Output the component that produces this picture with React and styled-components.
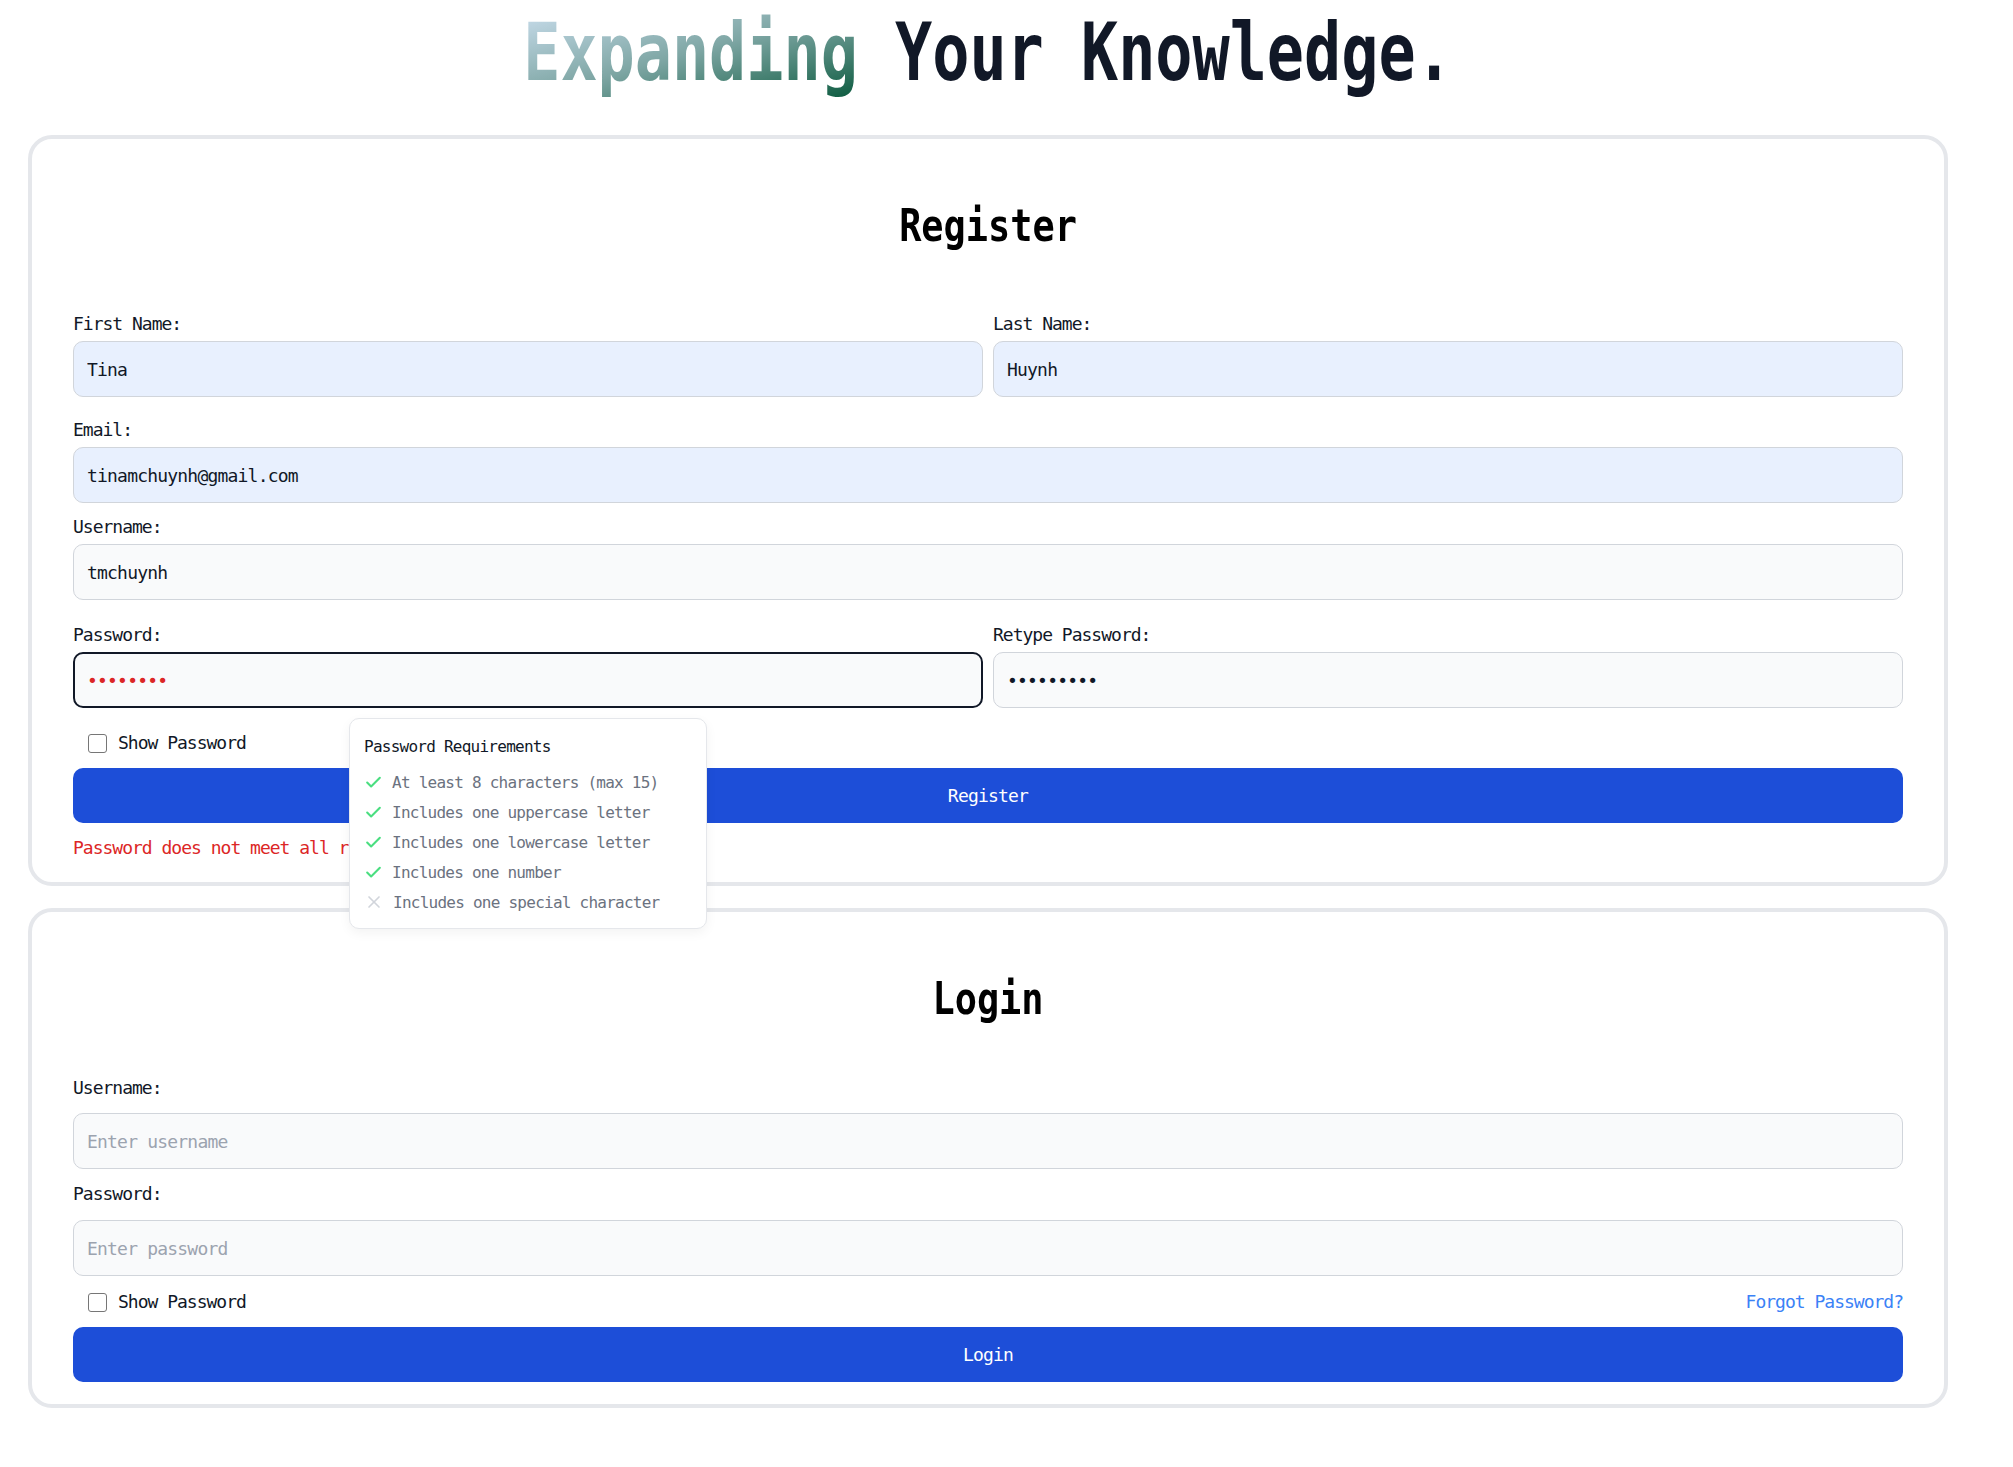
import React from "react";
import styled, { createGlobalStyle } from "styled-components";
import { Check, X } from "lucide-react";

const GlobalStyle = createGlobalStyle`
  * {
    box-sizing: border-box;
  }
  body {
    margin: 0;
    background: #ffffff;
    font-family: "DejaVu Sans Mono", monospace;
    color: #111827;
  }
`;

const Page = styled.div`
  width: 1920px;
  margin-left: 28px;
  padding-top: 13px;
`;

const Title = styled.h1`
  margin: 0 0 42px;
  font-size: 80px;
  line-height: 80px;
  font-weight: 700;
  text-align: center;
  white-space: nowrap;
  color: #111827;
  transform: scaleX(0.772);
`;

const Gradient = styled.span`
  background: linear-gradient(to bottom right, #cde0f0, #7ea6a4 50%, #0b5a3e);
  -webkit-background-clip: text;
  background-clip: text;
  color: transparent;
`;

const Card = styled.section`
  border: 4px solid #e5e7eb;
  border-radius: 24px;
  padding: 62px 41px 22px;
  margin-bottom: 22px;
  background: #ffffff;
`;

const Heading = styled.h2`
  margin: 0 0 ${(p) => p.$mb}px;
  font-size: 45px;
  line-height: 50px;
  font-weight: 700;
  text-align: center;
  color: #000000;
  transform: scaleX(0.82);
`;

const Row = styled.div`
  display: grid;
  grid-template-columns: 1fr 1fr;
  gap: 10px;
  margin-bottom: ${(p) => p.$mb || 0}px;
`;

const Field = styled.div`
  position: relative;
  margin-bottom: ${(p) => p.$mb || 0}px;
`;

const Label = styled.label`
  display: block;
  margin-bottom: ${(p) => p.$gap ?? 5}px;
  font-size: 18px;
  line-height: 24px;
  letter-spacing: -1px;
  color: #111827;
`;

const Input = styled.input`
  display: block;
  width: 100%;
  height: 56px;
  padding: 0 ${(p) => (p.$focused ? 12 : 13)}px;
  border: ${(p) => (p.$focused ? "2px solid #111827" : "1px solid #d1d5db")};
  border-radius: 10px;
  background: ${(p) => (p.$autofill ? "#e8f0fe" : "#f9fafb")};
  font-family: inherit;
  font-size: 18px;
  letter-spacing: -0.8px;
  color: ${(p) => (p.$invalid ? "#dc2626" : "#111827")};
  outline: none;

  &::placeholder {
    color: #9ca3af;
  }
`;

const CheckRow = styled.div`
  display: flex;
  align-items: center;
  justify-content: space-between;
  height: 24px;
  padding-left: 15px;
  margin-bottom: 13px;
`;

const CheckLabel = styled.label`
  display: flex;
  align-items: center;
  gap: 11px;
  font-size: 18px;
  line-height: 24px;
  letter-spacing: -1px;
  color: #111827;
`;

const Checkbox = styled.input`
  appearance: none;
  width: 19px;
  height: 19px;
  margin: 0;
  border: 1px solid #767676;
  border-radius: 3px;
  background: #ffffff;
`;

const ForgotLink = styled.a`
  font-size: 18px;
  line-height: 24px;
  letter-spacing: -1px;
  color: #3b82f6;
  text-decoration: none;
`;

const Button = styled.button`
  display: block;
  width: 100%;
  height: 55px;
  border: none;
  border-radius: 10px;
  background: #1d4ed8;
  color: #ffffff;
  font-family: inherit;
  font-size: 18px;
  letter-spacing: -0.8px;
`;

const ErrorText = styled.p`
  margin: 13px 0 0;
  font-size: 18px;
  line-height: 24px;
  letter-spacing: -1px;
  color: #dc2626;
`;

// popover sits over the form, as in the live page
const Tooltip = styled.div`
  position: absolute;
  z-index: 10;
  top: calc(100% + 10px);
  left: 276px;
  width: 358px;
  padding: 18px 14px 11px;
  border: 1px solid #e5e7eb;
  border-radius: 10px;
  background: #ffffff;
  box-shadow: 0 4px 12px rgba(0, 0, 0, 0.05);
`;

const TooltipTitle = styled.div`
  margin-bottom: 10px;
  font-size: 16px;
  line-height: 20px;
  letter-spacing: -0.75px;
  color: #111827;
`;

const Requirement = styled.div`
  display: flex;
  align-items: center;
  gap: 9px;
  height: 30px;
  font-size: 16px;
  letter-spacing: -0.75px;
  color: #6b7280;

  & > svg {
    flex-shrink: 0;
    color: ${(p) => (p.$met ? "#4ade80" : "#d1d5db")};
  }
`;

const requirements = [
  { text: "At least 8 characters (max 15)", met: true },
  { text: "Includes one uppercase letter", met: true },
  { text: "Includes one lowercase letter", met: true },
  { text: "Includes one number", met: true },
  { text: "Includes one special character", met: false },
];

function App() {
  return (
    <Page>
      <GlobalStyle />
      <Title>
        <Gradient>Expanding</Gradient> Your Knowledge.
      </Title>

      <Card>
        <Heading $mb={61}>Register</Heading>
        <Row $mb={21}>
          <Field>
            <Label>First Name:</Label>
            <Input $autofill defaultValue="Tina" />
          </Field>
          <Field>
            <Label>Last Name:</Label>
            <Input $autofill defaultValue="Huynh" />
          </Field>
        </Row>
        <Field $mb={12}>
          <Label>Email:</Label>
          <Input $autofill defaultValue="tinamchuynh@gmail.com" />
        </Field>
        <Field $mb={23}>
          <Label>Username:</Label>
          <Input defaultValue="tmchuynh" />
        </Field>
        <Row $mb={23}>
          <Field>
            <Label>Password:</Label>
            <Input type="password" $focused $invalid defaultValue="Tinamc12" />
            <Tooltip>
              <TooltipTitle>Password Requirements</TooltipTitle>
              {requirements.map((r) => (
                <Requirement key={r.text} $met={r.met}>
                  {r.met ? <Check size={19} strokeWidth={2.6} /> : <X size={20} strokeWidth={2} />}
                  <span>{r.text}</span>
                </Requirement>
              ))}
            </Tooltip>
          </Field>
          <Field>
            <Label>Retype Password:</Label>
            <Input type="password" defaultValue="Tinamc123" />
          </Field>
        </Row>
        <CheckRow>
          <CheckLabel>
            <Checkbox type="checkbox" />
            Show Password
          </CheckLabel>
        </CheckRow>
        <Button>Register</Button>
        <ErrorText>Password does not meet all requirements.</ErrorText>
      </Card>

      <Card>
        <Heading $mb={52}>Login</Heading>
        <Field $mb={13}>
          <Label $gap={13}>Username:</Label>
          <Input placeholder="Enter username" />
        </Field>
        <Field $mb={14}>
          <Label $gap={14}>Password:</Label>
          <Input type="password" placeholder="Enter password" />
        </Field>
        <CheckRow>
          <CheckLabel>
            <Checkbox type="checkbox" />
            Show Password
          </CheckLabel>
          <ForgotLink href="#">Forgot Password?</ForgotLink>
        </CheckRow>
        <Button>Login</Button>
      </Card>
    </Page>
  );
}

export default App;
